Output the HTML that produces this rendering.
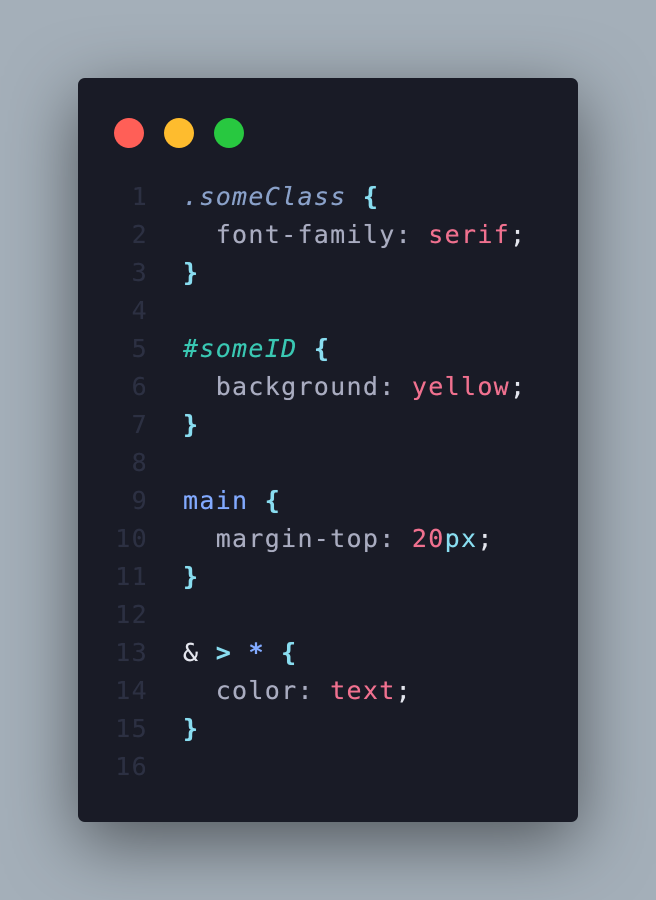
<!DOCTYPE html>
<html><head><meta charset="utf-8"><style>
html,body{margin:0;padding:0}
body{width:656px;height:900px;background:#a4afb9;position:relative;overflow:hidden}
.card{position:absolute;left:78px;top:78px;width:500px;height:744px;background:#191b26;border-radius:7px;box-shadow:0 20px 70px rgba(0,0,0,0.5)}
.dot{position:absolute;top:118px;width:30px;height:30px;border-radius:50%}
.l{position:absolute;left:0;width:656px;height:38px;line-height:38px;font-family:"DejaVu Sans Mono","Liberation Mono",monospace;font-size:25px;letter-spacing:1.3px;white-space:pre;color:#a9acc0;text-shadow:0 0 0.4px currentColor}
.n{position:absolute;right:508px;color:#2c3042;text-align:right}
.c{position:absolute;left:183px}
.s{color:#8aa1c9;font-style:italic}
.b{color:#89ddf0;font-weight:bold}
.p{color:#89ddf0}
.v{color:#f0718f}
.i{color:#3ac8b3;font-style:italic}
.m{color:#82aaff}
.w{color:#e4e6ee}
</style></head><body>
<div class="card"></div>
<div class="dot" style="left:114px;background:#ff5f57"></div>
<div class="dot" style="left:164px;background:#febc2e"></div>
<div class="dot" style="left:214px;background:#28c840"></div>
<div class="l" style="top:178px"><span class="n">1</span><span class="c"><span class="s">.someClass</span> <span class="b">{</span></span></div>
<div class="l" style="top:216px"><span class="n">2</span><span class="c">  font-family: <span class="v">serif</span><span class="w">;</span></span></div>
<div class="l" style="top:254px"><span class="n">3</span><span class="c"><span class="b">}</span></span></div>
<div class="l" style="top:292px"><span class="n">4</span></div>
<div class="l" style="top:330px"><span class="n">5</span><span class="c"><span class="i">#someID</span> <span class="b">{</span></span></div>
<div class="l" style="top:368px"><span class="n">6</span><span class="c">  background: <span class="v">yellow</span><span class="w">;</span></span></div>
<div class="l" style="top:406px"><span class="n">7</span><span class="c"><span class="b">}</span></span></div>
<div class="l" style="top:444px"><span class="n">8</span></div>
<div class="l" style="top:482px"><span class="n">9</span><span class="c"><span class="m">main</span> <span class="b">{</span></span></div>
<div class="l" style="top:520px"><span class="n">10</span><span class="c">  margin-top: <span class="v">20</span><span class="p">px</span><span class="w">;</span></span></div>
<div class="l" style="top:558px"><span class="n">11</span><span class="c"><span class="b">}</span></span></div>
<div class="l" style="top:596px"><span class="n">12</span></div>
<div class="l" style="top:634px"><span class="n">13</span><span class="c"><span class="w">&amp;</span> <span class="b">&gt;</span> <span class="b" style="color:#82aaff">*</span> <span class="b">{</span></span></div>
<div class="l" style="top:672px"><span class="n">14</span><span class="c">  color: <span class="v">text</span><span class="w">;</span></span></div>
<div class="l" style="top:710px"><span class="n">15</span><span class="c"><span class="b">}</span></span></div>
<div class="l" style="top:748px"><span class="n">16</span></div>
</body></html>
